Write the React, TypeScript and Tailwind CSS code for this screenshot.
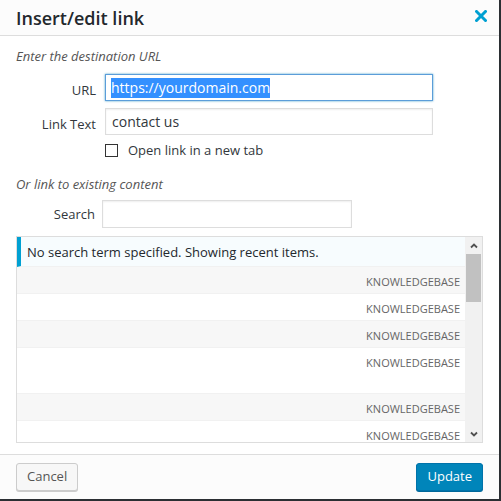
import React from "react";

const rows = [
  { tall: false },
  { tall: false },
  { tall: false },
  { tall: true },
  { tall: false },
  { tall: false },
];

export default function App() {
  return (
    <div className="w-[501px] h-[501px] bg-[#2b2f33]" style={{ fontFamily: '"Open Sans", "Liberation Sans", sans-serif' }}>
      <div className="w-[499px] h-[499px] bg-white flex flex-col text-[#32373c]">
        {/* Header */}
        <div className="h-[36px] shrink-0 bg-[#fcfcfc] border-b border-[#dddddd] flex items-center justify-between pl-4 pr-[12px]">
          <h1 className="text-[18px] font-semibold text-[#23282d] leading-none">Insert/edit link</h1>
          <svg width="12" height="12" viewBox="0 0 12 12" className="-mt-[3px]">
            <path d="M1.5 1.5 L10.5 10.5 M10.5 1.5 L1.5 10.5" stroke="#00a0d2" strokeWidth="3" strokeLinecap="square" />
          </svg>
        </div>

        {/* Body */}
        <div className="flex-1 px-4 pt-[11px] flex flex-col">
          <p className="text-[13px] italic text-[#555] leading-[18px]">Enter the destination URL</p>

          <div className="mt-[9px] flex items-start">
            <label className="w-[80px] pt-[7px] text-right text-[13px] leading-[18px] text-[#32373c]">URL</label>
            <div className="ml-[9px] w-[328px] h-[27px] border border-[#5b9dd9] shadow-[0_0_2px_rgba(30,140,190,0.8)] flex items-center pl-[5px]">
              <span className="bg-[#3390ff] text-white text-[14px] leading-[20px]">https://yourdomain.com</span>
            </div>
          </div>

          <div className="mt-[7px] flex items-start">
            <label className="w-[80px] pt-[7px] text-right text-[13px] leading-[18px] text-[#32373c]">Link Text</label>
            <div className="ml-[9px] w-[328px] h-[27px] border border-[#dddddd] shadow-[inset_0_1px_2px_rgba(0,0,0,0.07)] flex items-center pl-[6px]">
              <span className="text-[14px] text-[#32373c] leading-[20px]">contact us</span>
            </div>
          </div>

          <div className="mt-[6px] ml-[89px] flex items-center">
            <div className="w-[13px] h-[13px] border border-[#333] bg-white" />
            <span className="ml-[10px] text-[13px] text-[#32373c] leading-[18px]">Open link in a new tab</span>
          </div>

          <p className="mt-[16px] text-[13px] italic text-[#555] leading-[18px]">Or link to existing content</p>

          <div className="mt-[7px] flex items-center">
            <label className="w-[79px] text-right text-[13px] leading-[18px] text-[#32373c]">Search</label>
            <div className="ml-[7px] w-[250px] h-[28px] border border-[#dddddd] shadow-[inset_0_1px_2px_rgba(0,0,0,0.07)]" />
          </div>

          {/* Results */}
          <div className="mt-[8px] h-[207px] border border-[#dddddd] flex overflow-hidden">
            <div className="flex-1 flex flex-col overflow-hidden">
              <div className="h-[30px] shrink-0 bg-[#f7fcfe] border-l-4 border-[#00a0d2] border-b border-b-[#f1f1f1] flex items-center pl-[6px]">
                <span className="text-[13px] text-[#23282d] leading-[18px]">No search term specified. Showing recent items.</span>
              </div>
              {rows.map((r, i) => (
                <div
                  key={i}
                  className={`${r.tall ? "h-[46px]" : "h-[27px]"} shrink-0 border-b border-[#f1f1f1] ${i % 2 === 0 ? "bg-[#f7f7f7]" : "bg-white"} flex justify-end pt-[7px] pr-[5px]`}
                >
                  <span className="text-[11px] uppercase text-[#666] leading-[15px]">Knowledgebase</span>
                </div>
              ))}
            </div>

            {/* Scrollbar */}
            <div className="w-[17px] shrink-0 bg-[#f1f1f1] flex flex-col">
              <div className="h-[17px] flex items-center justify-center">
                <svg width="8" height="6" viewBox="0 0 8 6">
                  <path d="M1 4.5 L4 1.5 L7 4.5" fill="none" stroke="#505050" strokeWidth="1.8" />
                </svg>
              </div>
              <div className="mx-[1px] h-[48px] bg-[#c1c1c1]" />
              <div className="flex-1" />
              <div className="h-[17px] flex items-center justify-center">
                <svg width="8" height="6" viewBox="0 0 8 6">
                  <path d="M1 1.5 L4 4.5 L7 1.5" fill="none" stroke="#505050" strokeWidth="1.8" />
                </svg>
              </div>
            </div>
          </div>
        </div>

        {/* Footer */}
        <div className="h-[45px] shrink-0 bg-[#fcfcfc] border-t border-[#dddddd] flex items-center justify-between px-4">
          <button className="h-[28px] px-[10px] bg-[#f7f7f7] border border-[#cccccc] rounded-[3px] shadow-[0_1px_0_#cccccc] text-[13px] text-[#555]">
            Cancel
          </button>
          <button className="h-[28px] px-[10px] bg-[#0085ba] border border-[#0073aa] rounded-[3px] shadow-[0_1px_0_#006799] text-[13px] text-white">
            Update
          </button>
        </div>
      </div>
    </div>
  );
}
